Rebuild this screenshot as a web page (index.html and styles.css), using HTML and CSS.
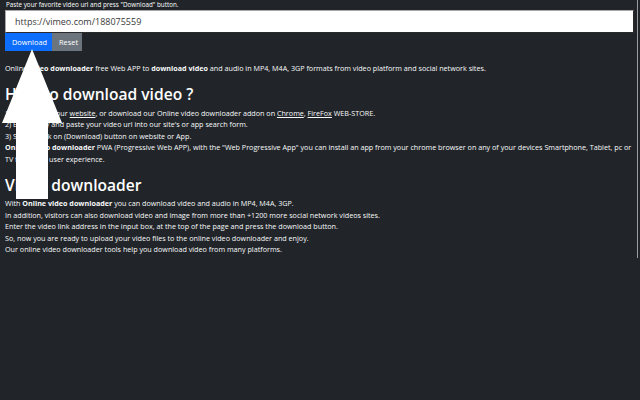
FILE: index.html
```html
<!DOCTYPE html>
<html lang="en">
<head>
<meta charset="utf-8">
<title>Online video downloader</title>
<link rel="stylesheet" href="styles.css">
</head>
<body>
<div class="frame">
  <div class="content">
    <label class="hint" for="url">Paste your favorite video url and press "Download" button.</label>
    <input id="url" class="url" type="text" value="https://vimeo.com/188075559">
    <div class="btns">
      <button class="btn btn-primary">Download</button>
      <button class="btn btn-secondary">Reset</button>
    </div>
    <p class="intro">Online <b>video downloader</b> free Web APP to <b>download video</b> and audio in MP4, M4A, 3GP formats from video platform and social network sites.</p>
    <h2 class="title t1">How to download video ?</h2>
    <p class="lines">
      1) Simply go to our <a href="#">website</a>, or download our Online video downloader addon on <a href="#">Chrome</a>, <a href="#">FireFox</a> WEB-STORE.<br>
      2) Easily copy and paste your video url into our site's or app search form.<br>
      3) Simply click on (Download) button on website or App.<br>
      <b>Online video downloader</b> PWA (Progressive Web APP), with the "Web Progressive App" you can install an app from your chrome browser on any of your devices Smartphone, Tablet, pc or TV for better user experience.
    </p>
    <h2 class="title t2">Video downloader</h2>
    <p class="lines last">
      With <b>Online video downloader</b> you can download video and audio in MP4, M4A, 3GP.<br>
      In addition, visitors can also download video and image from more than +1200 more social network videos sites.<br>
      Enter the video link address in the input box, at the top of the page and press the download button.<br>
      So, now you are ready to upload your video files to the online video downloader and enjoy.<br>
      Our online video downloader tools help you download video from many platforms.<br>
      Our tool is available to download video from all the platforms that let you like it.
    </p>
  </div>
</div>
<svg class="arrow" width="64" height="202" viewBox="0 0 64 202" aria-hidden="true">
  <polygon points="32,49 62,123 48,123 48,199 16,199 16,123 2,123" fill="#ffffff"/>
</svg>
</body>
</html>
```
FILE: styles.css
```css
html, body {
  margin: 0;
  padding: 0;
  background: #212529;
}
body {
  position: relative;
  width: 640px;
  height: 400px;
  overflow: hidden;
  font-family: "Open Sans", "Noto Sans", sans-serif;
  color: #f8f9fa;
}
.frame {
  width: 637px;
  height: 258px;
  overflow: hidden;
  border-right: 1px solid #9a9c9e;
}
.content {
  padding: 0 3px 0 5px;
}
.hint {
  display: block;
  font-size: 6.3px;
  line-height: 10px;
  height: 10px;
  padding-left: 1px;
  color: #ffffff;
}
.url {
  display: block;
  box-sizing: border-box;
  width: 629px;
  height: 23px;
  margin: 0;
  padding: 0 0 0 9px;
  border: 1px solid #2b2b2b;
  border-top-color: #a9a9a9;
  border-left-color: #a9a9a9;
  background: #ffffff;
  color: #3a3a3a;
  font-family: "Open Sans", "Noto Sans", sans-serif;
  font-size: 9px;
  outline: none;
}
.btns {
  display: flex;
  height: 18px;
}
.btn {
  border: 0;
  margin: 0;
  padding: 0 7px;
  height: 18px;
  font-family: "Open Sans", "Noto Sans", sans-serif;
  font-size: 7.4px;
  color: #ffffff;
}
.btn-primary {
  background: #0d6efd;
  width: 47px;
}
.btn-secondary {
  background: #6c757d;
  width: 30px;
}
p {
  margin: 0;
  font-size: 7.2px;
  line-height: 11.5px;
}
.intro {
  margin-top: 12px;
}
.title {
  margin: 0;
  font-weight: 600;
  font-size: 15.6px;
  line-height: 20px;
  color: #ffffff;
}
.t1 {
  margin-top: 9px;
  margin-bottom: 4px;
}
.t2 {
  margin-top: 10px;
  margin-bottom: 3px;
}
a {
  color: inherit;
  text-decoration: underline;
}
b {
  font-weight: 700;
}
.arrow {
  position: absolute;
  left: 0;
  top: 0;
}
```
